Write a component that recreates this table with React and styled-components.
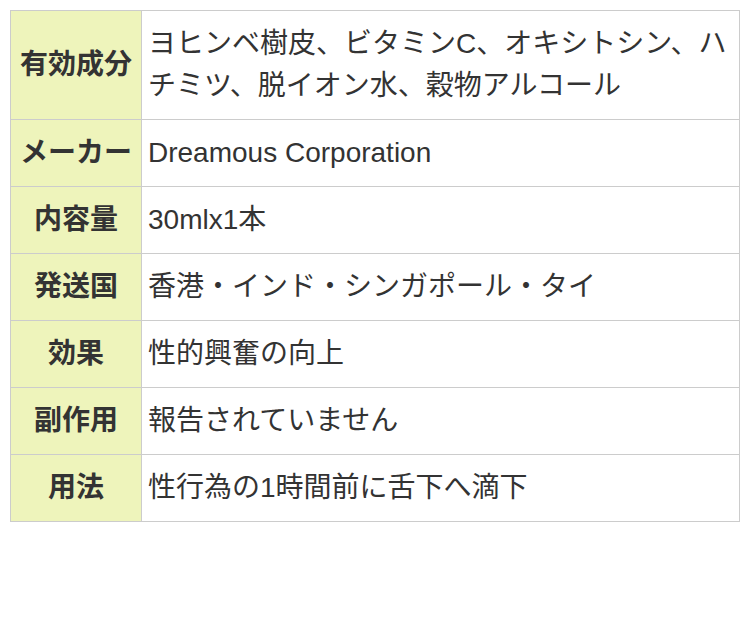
import React from "react";
import styled, { createGlobalStyle } from "styled-components";

const rows = [
  {
    label: "有効成分",
    value: "ヨヒンベ樹皮、ビタミンC、オキシトシン、ハチミツ、脱イオン水、穀物アルコール",
  },
  { label: "メーカー", value: "Dreamous Corporation" },
  { label: "内容量", value: "30mlx1本" },
  { label: "発送国", value: "香港・インド・シンガポール・タイ" },
  { label: "効果", value: "性的興奮の向上" },
  { label: "副作用", value: "報告されていません" },
  { label: "用法", value: "性行為の1時間前に舌下へ滴下" },
];

const GlobalStyle = createGlobalStyle`
  body {
    margin: 0;
    background: #fff;
    font-family: "Liberation Sans", Arial, "Noto Sans CJK JP", sans-serif;
  }
`;

const Page = styled.div`
  padding: 10px;
`;

const Table = styled.table`
  width: 730px;
  border-collapse: collapse;
  table-layout: fixed;
  font-size: 28px;
  line-height: 42px;
  color: #333;
`;

const Label = styled.th`
  width: 118px;
  padding: 12px 6px;
  border: 1px solid #ccc;
  background-color: #eef4bb;
  font-weight: bold;
  text-align: center;
  vertical-align: middle;
  white-space: nowrap;
`;

const Value = styled.td`
  padding: 12px 6px;
  border: 1px solid #ccc;
  text-align: left;
  vertical-align: middle;
`;

const App = () => {
  return (
    <Page>
      <GlobalStyle />
      <Table>
        <tbody>
          {rows.map((row) => (
            <tr key={row.label}>
              <Label>{row.label}</Label>
              <Value>{row.value}</Value>
            </tr>
          ))}
        </tbody>
      </Table>
    </Page>
  );
};

export default App;
